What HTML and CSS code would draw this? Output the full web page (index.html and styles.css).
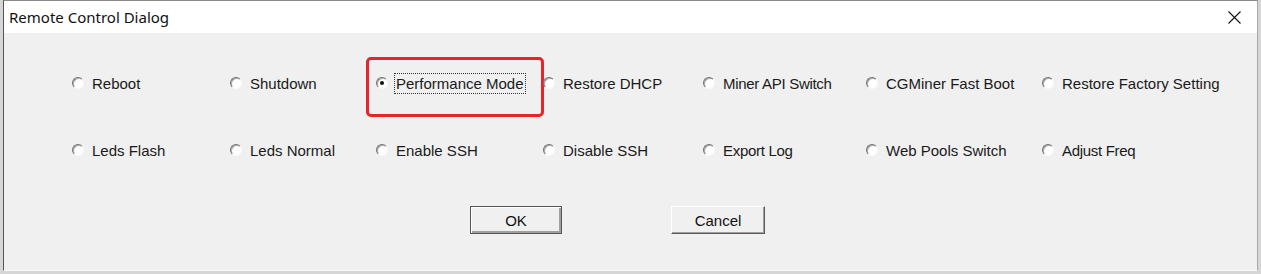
FILE: index.html
```html
<!DOCTYPE html>
<html lang="en">

<head>
  <meta charset="UTF-8">
  <meta name="viewport" content="width=device-width, initial-scale=1.0">
  <title>Remote Control Dialog</title>
  <link rel="stylesheet" href="styles.css">
</head>

<body>
  <div class="window">
    <div class="titlebar">
      <span class="title">Remote Control Dialog</span>
      <span class="close">
        <svg width="13" height="13" viewBox="0 0 13 13">
          <path d="M0.5 0.5 L12.5 12.5 M12.5 0.5 L0.5 12.5" stroke="#111" stroke-width="1.1" fill="none" />
        </svg>
      </span>
    </div>
    <div class="client">
      <div class="options">
        <label class="opt"><span class="radio"></span><span class="text">Reboot</span></label>
        <label class="opt"><span class="radio"></span><span class="text">Shutdown</span></label>
        <label class="opt marked"><span class="radio checked"></span><span class="text focus">Performance Mode</span></label>
        <label class="opt"><span class="radio"></span><span class="text">Restore DHCP</span></label>
        <label class="opt"><span class="radio"></span><span class="text tight">Miner API Switch</span></label>
        <label class="opt"><span class="radio"></span><span class="text">CGMiner Fast Boot</span></label>
        <label class="opt"><span class="radio"></span><span class="text">Restore Factory Setting</span></label>

        <label class="opt"><span class="radio"></span><span class="text">Leds Flash</span></label>
        <label class="opt"><span class="radio"></span><span class="text">Leds Normal</span></label>
        <label class="opt"><span class="radio"></span><span class="text">Enable SSH</span></label>
        <label class="opt"><span class="radio"></span><span class="text">Disable SSH</span></label>
        <label class="opt"><span class="radio"></span><span class="text tight">Export Log</span></label>
        <label class="opt"><span class="radio"></span><span class="text">Web Pools Switch</span></label>
        <label class="opt"><span class="radio"></span><span class="text tight">Adjust Freq</span></label>
      </div>
      <div class="buttons">
        <button class="btn default">OK</button>
        <button class="btn">Cancel</button>
      </div>
    </div>
  </div>
</body>

</html>
```

FILE: styles.css
```css
* {
  margin: 0;
  padding: 0;
  box-sizing: border-box;
}

body {
  background: #d6d6d6;
  width: 1261px;
  height: 274px;
  overflow: hidden;
  font-family: "Liberation Sans", Arial, sans-serif;
}

.window {
  margin-left: 3px;
  width: 1255px;
  border-top: 1px solid #8a8a8a;
  border-left: 1px solid #555;
  border-right: 1px solid #a8a8a8;
  border-bottom: 1px solid #fbfbfb;
  background: #f0f0f0;
}

.titlebar {
  height: 32px;
  background: #fff;
  display: flex;
  align-items: center;
  justify-content: space-between;
  padding-left: 5px;
  padding-right: 16px;
}

.title {
  font-family: "Noto Sans", sans-serif;
  font-size: 15px;
  color: #111;
  margin-top: -1px;
}

.close {
  display: flex;
  margin-top: 1px;
}

.client {
  height: 237px;
  padding-top: 40px;
}

.options {
  display: grid;
  grid-template-columns: 158px 146px 167px 160px 163px 176px auto;
  grid-auto-rows: 20px;
  row-gap: 47px;
  padding-left: 68px;
}

.opt {
  display: flex;
  align-items: center;
  gap: 6px;
  font-size: 15px;
  color: #1a1a1a;
  position: relative;
  white-space: nowrap;
}

.radio {
  width: 12px;
  height: 12px;
  border-radius: 50%;
  background: #fff;
  border: 1px solid;
  border-color: #707070 #f8f8f8 #f8f8f8 #707070;
  box-shadow: inset 1px 1px 0 #a8a8a8;
  position: relative;
  flex: none;
}

.checked::after {
  content: "";
  position: absolute;
  left: 3px;
  top: 3px;
  width: 4px;
  height: 4px;
  border-radius: 50%;
  background: #111;
}

.text {
  padding: 1px 1px;
  border: 1px solid transparent;
}

.tight {
  letter-spacing: -0.3px;
}

.focus {
  border: 1px dotted #333;
}

.marked::before {
  content: "";
  position: absolute;
  left: -10px;
  top: -16px;
  width: 172px;
  height: 54px;
  border: 3px solid #e8232a;
  border-radius: 5px;
}

.buttons {
  display: flex;
  gap: 109px;
  padding-left: 466px;
  margin-top: 46px;
}

.btn {
  font-family: "Liberation Sans", Arial, sans-serif;
  font-size: 15px;
  color: #111;
  height: 28px;
  background: #f0f0f0;
  border: 1px solid;
  border-color: #fff #5a5a5a #5a5a5a #fff;
  box-shadow: inset -1px -1px 0 #a0a0a0;
}

.default {
  width: 92px;
  border: 1px solid #555;
  box-shadow: inset 1px 1px 0 #fff, inset -2px -2px 0 #a0a0a0;
}

.btn:not(.default) {
  width: 94px;
}
```
